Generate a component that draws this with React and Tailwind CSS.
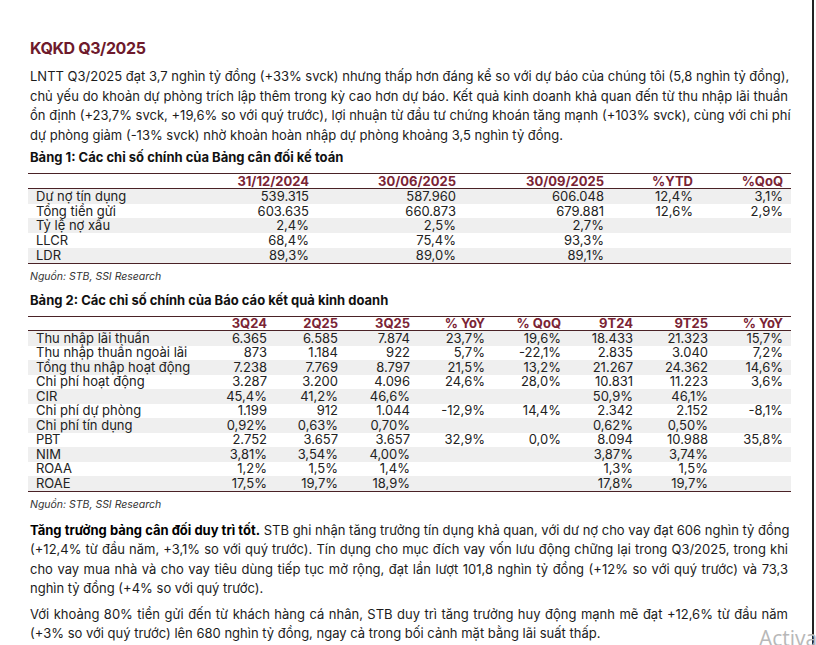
import React from "react";

const font = { fontFamily: "Inter, 'Noto Sans', sans-serif" };

function JLine({ children, last }) {
  return (
    <div className={last ? "whitespace-nowrap" : "whitespace-nowrap text-justify [text-align-last:justify]"}>
      {children}
    </div>
  );
}

const t1Widths = ["w-[201px]", "w-[80px]", "w-[147px]", "w-[148px]", "w-[89px]", "w-[90px]"];
const t1Head = ["", "31/12/2024", "30/06/2025", "30/09/2025", "%YTD", "%QoQ"];
const t1Rows = [
  ["Dư nợ tín dụng", "539.315", "587.960", "606.048", "12,4%", "3,1%"],
  ["Tổng tiền gửi", "603.635", "660.873", "679.881", "12,6%", "2,9%"],
  ["Tỷ lệ nợ xấu", "2,4%", "2,5%", "2,7%", "", ""],
  ["LLCR", "68,4%", "75,4%", "93,3%", "", ""],
  ["LDR", "89,3%", "89,0%", "89,1%", "", ""],
];

const t2Widths = ["w-[172px]", "w-[67px]", "w-[71px]", "w-[72px]", "w-[75px]", "w-[76px]", "w-[72px]", "w-[75px]", "w-[75px]"];
const t2Head = ["", "3Q24", "2Q25", "3Q25", "% YoY", "% QoQ", "9T24", "9T25", "% YoY"];
const t2Rows = [
  ["Thu nhập lãi thuần", "6.365", "6.585", "7.874", "23,7%", "19,6%", "18.433", "21.323", "15,7%"],
  ["Thu nhập thuần ngoài lãi", "873", "1.184", "922", "5,7%", "-22,1%", "2.835", "3.040", "7,2%"],
  ["Tổng thu nhập hoạt động", "7.238", "7.769", "8.797", "21,5%", "13,2%", "21.267", "24.362", "14,6%"],
  ["Chi phí hoạt động", "3.287", "3.200", "4.096", "24,6%", "28,0%", "10.831", "11.223", "3,6%"],
  ["CIR", "45,4%", "41,2%", "46,6%", "", "", "50,9%", "46,1%", ""],
  ["Chi phí dự phòng", "1.199", "912", "1.044", "-12,9%", "14,4%", "2.342", "2.152", "-8,1%"],
  ["Chi phí tín dụng", "0,92%", "0,63%", "0,70%", "", "", "0,62%", "0,50%", ""],
  ["PBT", "2.752", "3.657", "3.657", "32,9%", "0,0%", "8.094", "10.988", "35,8%"],
  ["NIM", "3,81%", "3,54%", "4,00%", "", "", "3,87%", "3,74%", ""],
  ["ROAA", "1,2%", "1,5%", "1,4%", "", "", "1,3%", "1,5%", ""],
  ["ROAE", "17,5%", "19,7%", "18,9%", "", "", "17,8%", "19,7%", ""],
];

function Table({ widths, head, rows, rowH }) {
  return (
    <div className="ml-[-2px] w-[763px] border-y border-[#4a2226] text-[13px] text-[#222]">
      <div className={`flex ${rowH} items-center border-b border-[#4a2226] font-bold text-[#7a2435]`}>
        {head.map((h, i) => (
          <div key={i} className={`${widths[i]} shrink-0 leading-none ${i === 0 ? "pl-2" : "text-right"}`}>{h}</div>
        ))}
      </div>
      {rows.map((r, ri) => (
        <div key={ri} className={`flex ${rowH} items-center ${ri % 2 === 0 ? "bg-[#efefef]" : ""}`}>
          {r.map((c, i) => (
            <div key={i} className={`${widths[i]} shrink-0 leading-none ${i === 0 ? "pl-2 whitespace-nowrap" : "text-right"}`}>{c}</div>
          ))}
        </div>
      ))}
    </div>
  );
}

export default function App() {
  return (
    <div style={font} className="relative h-[645px] w-[816px] overflow-hidden bg-white">
      <div className="h-[645px] w-[814px] border-r-2 border-[#222]">
        <div className="w-[758px] pl-[30px] pt-[38px] text-[#1c1c1c]" style={{ boxSizing: "content-box" }}>
          <h1 className="text-[16px] font-bold leading-[20px] tracking-tight text-[#6e1a2c]">KQKD Q3/2025</h1>
          <div className="mt-[9px] text-[13px] leading-[19.6px]">
            <JLine>LNTT Q3/2025 đạt 3,7 nghìn tỷ đồng (+33% svck) nhưng thấp hơn đáng kể so với dự báo của chúng tôi (5,8 nghìn tỷ đồng),</JLine>
            <JLine>chủ yếu do khoản dự phòng trích lập thêm trong kỳ cao hơn dự báo. Kết quả kinh doanh khả quan đến từ thu nhập lãi thuần</JLine>
            <JLine>ổn định (+23,7% svck, +19,6% so với quý trước), lợi nhuận từ đầu tư chứng khoán tăng mạnh (+103% svck), cùng với chi phí</JLine>
            <JLine last>dự phòng giảm (-13% svck) nhờ khoản hoàn nhập dự phòng khoảng 3,5 nghìn tỷ đồng.</JLine>
          </div>
          <div className="mt-[4px] text-[13px] font-bold leading-[16px] text-[#111]">Bảng 1: Các chỉ số chính của Bảng cân đối kế toán</div>
          <div className="mt-[8px]">
            <Table widths={t1Widths} head={t1Head} rows={t1Rows} rowH="h-[14.7px]" />
          </div>
          <div className="mt-[6px] text-[10.5px] italic leading-[14px] text-[#333]">Nguồn: STB, SSI Research</div>
          <div className="mt-[8px] text-[13px] font-bold leading-[16px] text-[#111]">Bảng 2: Các chỉ số chính của Báo cáo kết quả kinh doanh</div>
          <div className="mt-[8px]">
            <Table widths={t2Widths} head={t2Head} rows={t2Rows} rowH="h-[14.5px]" />
          </div>
          <div className="mt-[6px] text-[10.5px] italic leading-[14px] text-[#333]">Nguồn: STB, SSI Research</div>
          <div className="mt-[9px] text-[13px] leading-[19.6px]">
            <JLine><b className="font-bold text-black">Tăng trưởng bảng cân đối duy trì tốt.</b> STB ghi nhận tăng trưởng tín dụng khả quan, với dư nợ cho vay đạt 606 nghìn tỷ đồng</JLine>
            <JLine>(+12,4% từ đầu năm, +3,1% so với quý trước). Tín dụng cho mục đích vay vốn lưu động chững lại trong Q3/2025, trong khi</JLine>
            <JLine>cho vay mua nhà và cho vay tiêu dùng tiếp tục mở rộng, đạt lần lượt 101,8 nghìn tỷ đồng (+12% so với quý trước) và 73,3</JLine>
            <JLine last>nghìn tỷ đồng (+4% so với quý trước).</JLine>
          </div>
          <div className="mt-[6px] text-[13px] leading-[19.6px]">
            <JLine>Với khoảng 80% tiền gửi đến từ khách hàng cá nhân, STB duy trì tăng trưởng huy động mạnh mẽ đạt +12,6% từ đầu năm</JLine>
            <JLine last>(+3% so với quý trước) lên 680 nghìn tỷ đồng, ngay cả trong bối cảnh mặt bằng lãi suất thấp.</JLine>
          </div>
        </div>
      </div>
      <div className="absolute left-[759px] top-[626px] whitespace-nowrap text-[21px] leading-[24px] text-[#b8b8b8]" style={{ fontFamily: "'Segoe UI', 'Open Sans', sans-serif" }}>
        Activate Windows
      </div>
    </div>
  );
}
